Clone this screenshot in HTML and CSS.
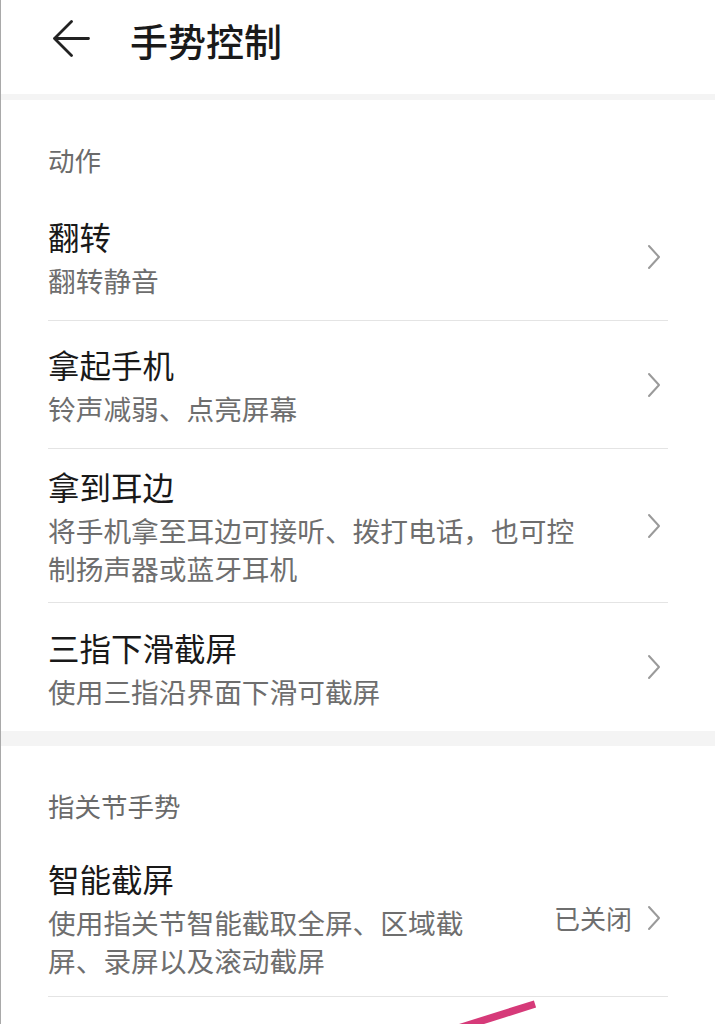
FILE: index.html
```html
<!DOCTYPE html>
<html lang="zh-CN">
<head>
<meta charset="utf-8">
<title>手势控制</title>
<link rel="stylesheet" href="styles.css">
</head>
<body>
<div class="page">
  <header class="topbar">
    <svg class="back" width="38" height="38" viewBox="0 0 38 38" aria-hidden="true">
      <path d="M19.5 1.5 L2.5 18.5 L19.5 35.5 M2.5 18.5 H36.5" fill="none" stroke="#222" stroke-width="2.8" stroke-linecap="round" stroke-linejoin="round"/>
    </svg>
    <h1 class="title">手势控制</h1>
  </header>
  <div class="band band-thin"></div>

  <section class="group">
    <div class="group-title">动作</div>
    <div class="row">
      <div class="text">
        <div class="row-title">翻转</div>
        <div class="row-sub">翻转静音</div>
      </div>
      <div class="right"><svg class="chev" width="16" height="28" viewBox="0 0 16 28"><path d="M3 3 L13 14 L3 25" fill="none" stroke="#9a9a9a" stroke-width="2" stroke-linecap="round" stroke-linejoin="round"/></svg></div>
    </div>
    <div class="row">
      <div class="text">
        <div class="row-title">拿起手机</div>
        <div class="row-sub">铃声减弱、点亮屏幕</div>
      </div>
      <div class="right"><svg class="chev" width="16" height="28" viewBox="0 0 16 28"><path d="M3 3 L13 14 L3 25" fill="none" stroke="#9a9a9a" stroke-width="2" stroke-linecap="round" stroke-linejoin="round"/></svg></div>
    </div>
    <div class="row">
      <div class="text">
        <div class="row-title">拿到耳边</div>
        <div class="row-sub">将手机拿至耳边可接听、拨打电话，也可控制扬声器或蓝牙耳机</div>
      </div>
      <div class="right"><svg class="chev" width="16" height="28" viewBox="0 0 16 28"><path d="M3 3 L13 14 L3 25" fill="none" stroke="#9a9a9a" stroke-width="2" stroke-linecap="round" stroke-linejoin="round"/></svg></div>
    </div>
    <div class="row last">
      <div class="text">
        <div class="row-title">三指下滑截屏</div>
        <div class="row-sub">使用三指沿界面下滑可截屏</div>
      </div>
      <div class="right"><svg class="chev" width="16" height="28" viewBox="0 0 16 28"><path d="M3 3 L13 14 L3 25" fill="none" stroke="#9a9a9a" stroke-width="2" stroke-linecap="round" stroke-linejoin="round"/></svg></div>
    </div>
  </section>

  <div class="band band-thick"></div>

  <section class="group">
    <div class="group-title">指关节手势</div>
    <div class="row tall">
      <div class="text">
        <div class="row-title">智能截屏</div>
        <div class="row-sub">使用指关节智能截取全屏、区域截屏、录屏以及滚动截屏</div>
      </div>
      <div class="right"><span class="value">已关闭</span><svg class="chev" width="16" height="28" viewBox="0 0 16 28"><path d="M3 3 L13 14 L3 25" fill="none" stroke="#9a9a9a" stroke-width="2" stroke-linecap="round" stroke-linejoin="round"/></svg></div>
    </div>
    <div class="row">
      <div class="text">
        <div class="row-title">字母手势</div>
        <div class="row-sub">使用指关节画字母启动应用</div>
      </div>
      <div class="right"><svg class="chev" width="16" height="28" viewBox="0 0 16 28"><path d="M3 3 L13 14 L3 25" fill="none" stroke="#9a9a9a" stroke-width="2" stroke-linecap="round" stroke-linejoin="round"/></svg></div>
    </div>
  </section>

  <svg class="mark" width="110" height="40" viewBox="0 0 110 40" aria-hidden="true">
    <path d="M4 38 L96 9" stroke="#d63a79" stroke-width="7.5" stroke-linecap="butt"/>
  </svg>
</div>
</body>
</html>
```

FILE: styles.css
```css
html, body {
  margin: 0;
  padding: 0;
  background: #ffffff;
}

body {
  font-family: "Noto Sans CJK SC", "Noto Sans", sans-serif;
  color: #191919;
  overflow: hidden;
}

.page {
  position: relative;
  height: 1024px;
  overflow: hidden;
  border-left: 1px solid #a9a9a9;
  box-sizing: border-box;
}

.topbar {
  display: flex;
  align-items: center;
  height: 80px;
  padding: 0 0 14px 51px;
}

.back {
  display: block;
  flex: none;
  margin-bottom: 3px;
}

.title {
  margin: 0 0 0 40px;
  font-size: 38px;
  line-height: 50px;
  font-weight: 500;
  color: #1a1a1a;
}

.band {
  background: #f4f4f4;
}

.band-thin {
  height: 6px;
}

.band-thick {
  height: 15px;
}

.group {
  margin: 0 47px 0 47px;
}

.group-title {
  height: 93px;
  box-sizing: border-box;
  padding-top: 45px;
  font-size: 26.5px;
  line-height: 30px;
  color: #6b6b6b;
}

.row {
  display: flex;
  align-items: center;
  gap: 68px;
  min-height: 128px;
  box-sizing: border-box;
  padding: 15px 0;
  border-bottom: 1px solid #e4e4e4;
}

.row.tall {
  padding: 17px 0;
}

.row.last {
  border-bottom: none;
}

.text {
  flex: 1;
  min-width: 0;
}

.row-title {
  font-size: 31.5px;
  line-height: 44px;
  color: #191919;
}

.row-sub {
  margin-top: 3px;
  font-size: 27.7px;
  line-height: 38px;
  color: #6e6e6e;
}

.right {
  display: flex;
  align-items: center;
  gap: 14px;
  flex: none;
  padding-right: 6px;
}

.value {
  font-size: 26px;
  line-height: 34px;
  color: #6e6e6e;
}

.chev {
  display: block;
}

.mark {
  position: absolute;
  left: 438px;
  top: 995px;
}
```
